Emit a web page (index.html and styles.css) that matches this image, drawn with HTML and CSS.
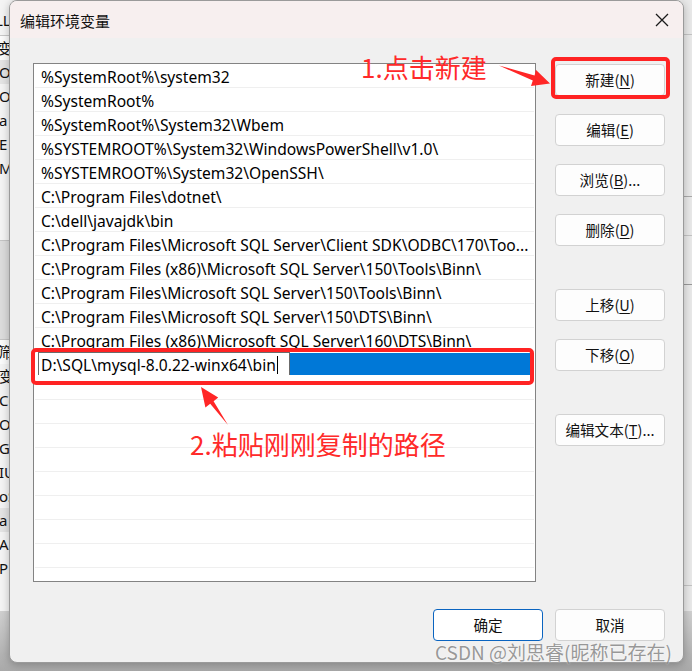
FILE: index.html
```html
<!DOCTYPE html>
<html lang="zh-CN">
<head>
<meta charset="utf-8">
<title>编辑环境变量</title>
<link rel="stylesheet" href="styles.css">
</head>
<body>
<div class="desk">
  <div class="bg-left">
    <div class="bl bl-top">LL</div>
    <div class="bl bl-white">变量</div>
    <div class="bl bl-grey">Or</div>
    <div class="bl">Or</div>
    <div class="bl">a</div>
    <div class="bl">E</div>
    <div class="bl">M</div>
    <div class="bl bl-gap"></div>
    <div class="bl bl-band"></div>
    <div class="bl bl-white">筛选</div>
    <div class="bl">变量</div>
    <div class="bl">Co</div>
    <div class="bl">Or</div>
    <div class="bl">G</div>
    <div class="bl">IU</div>
    <div class="bl">oS</div>
    <div class="bl bl-grey">a</div>
    <div class="bl">A</div>
    <div class="bl">P</div>
  </div>
  <div class="bg-right">
    <div class="br br1"></div>
    <div class="br br2"></div>
    <div class="br br3"></div>
    <div class="br br4"></div>
    <div class="br br5"></div>
  </div>
  <div class="bg-bottom"></div>

  <div class="dialog">
    <div class="titlebar">
      <span class="title">编辑环境变量</span>
      <svg class="close" width="14" height="14" viewBox="0 0 14 14"><path d="M1 1 L13 13 M13 1 L1 13" stroke="#1a1a1a" stroke-width="1.3" fill="none"/></svg>
    </div>
    <div class="body">
      <div class="main">
        <div class="list">
          <div class="row">%SystemRoot%\system32</div>
          <div class="row">%SystemRoot%</div>
          <div class="row">%SystemRoot%\System32\Wbem</div>
          <div class="row">%SYSTEMROOT%\System32\WindowsPowerShell\v1.0\</div>
          <div class="row">%SYSTEMROOT%\System32\OpenSSH\</div>
          <div class="row">C:\Program Files\dotnet\</div>
          <div class="row">C:\dell\javajdk\bin</div>
          <div class="row">C:\Program Files\Microsoft SQL Server\Client SDK\ODBC\170\Too...</div>
          <div class="row">C:\Program Files (x86)\Microsoft SQL Server\150\Tools\Binn\</div>
          <div class="row">C:\Program Files\Microsoft SQL Server\150\Tools\Binn\</div>
          <div class="row">C:\Program Files\Microsoft SQL Server\150\DTS\Binn\</div>
          <div class="row">C:\Program Files (x86)\Microsoft SQL Server\160\DTS\Binn\</div>
          <div class="row row-edit"><span class="editbox">D:\SQL\mysql-8.0.22-winx64\bin<span class="caret"></span></span><span class="sel"></span></div>
          <div class="row"></div>
          <div class="row"></div>
          <div class="row"></div>
          <div class="row"></div>
          <div class="row"></div>
          <div class="row"></div>
          <div class="row"></div>
          <div class="row"></div>
          <div class="row"></div>
        </div>
        <div class="btns">
          <button class="btn">新建(<u>N</u>)</button>
          <button class="btn">编辑(<u>E</u>)</button>
          <button class="btn">浏览(<u>B</u>)...</button>
          <button class="btn">删除(<u>D</u>)</button>
          <button class="btn btn-sep">上移(<u>U</u>)</button>
          <button class="btn">下移(<u>O</u>)</button>
          <button class="btn btn-sep">编辑文本(<u>T</u>)...</button>
        </div>
      </div>
      <div class="footer">
        <button class="btn btn-default">确定</button>
        <button class="btn">取消</button>
      </div>
    </div>
  </div>

  <div class="mark mark-new"></div>
  <div class="mark mark-edit"></div>
  <div class="note note1">1.点击新建</div>
  <div class="note note2">2.粘贴刚刚复制的路径</div>
  <svg class="arrows" width="692" height="671" viewBox="0 0 692 671">
    <polygon fill="#ff2626" points="499,65.5 534.6,75.4 535.8,69.8 550,83.5 531,86 532.8,80.5"/>
    <polygon fill="#ff2626" points="228,425 213.6,401.2 218.2,397.6 201,387 205.4,407.4 210.2,403.8"/>
  </svg>
  <div class="watermark">CSDN @刘思睿(昵称已存在)</div>
</div>
</body>
</html>
```
FILE: styles.css
```css
* { box-sizing: border-box; }
html, body { margin: 0; padding: 0; }
body {
  width: 692px;
  height: 671px;
  overflow: hidden;
  background: #b4b4b4;
  font-family: "Noto Sans", "Noto Sans CJK SC", sans-serif;
  color: #000;
}
.desk {
  position: relative;
  width: 692px;
  height: 671px;
  overflow: hidden;
  background: #ececec;
}

/* background window strips */
.bg-left {
  position: absolute;
  left: 0;
  top: 0;
  width: 12px;
  height: 620px;
  background: #f4f4f4;
  display: flex;
  flex-direction: column;
  font-family: "Noto Sans", "Noto Sans CJK SC", sans-serif;
  font-size: 15px;
  overflow: hidden;
}
.bl {
  height: 24px;
  line-height: 24px;
  white-space: nowrap;
  text-indent: -1px;
  color: #111;
  flex: none;
}
.bl-top { height: 36px; line-height: 40px; border-bottom: 1px solid #c8c8c8; text-indent: -5px; }
.bl-white { background: #fbfbfb; text-indent: -3px; }
.bl-grey { background: #e4e4e4; }
.bl-gap { height: 60px; background: #f4f4f4; }
.bl-band { height: 100px; background: #dcdcdc; border-top: 1px solid #c4c4c4; border-bottom: 1px solid #c4c4c4; }
.bg-right {
  position: absolute;
  right: 0;
  top: 0;
  width: 10px;
  height: 671px;
  background: #e9e9e9;
}
.br { position: absolute; left: 0; width: 10px; height: 1px; background: #c4c4c4; }
.br1 { top: 34px; }
.br2 { top: 196px; background: #aaa; }
.br3 { top: 235px; }
.br4 { top: 284px; background: #999; }
.br5 { top: 585px; }
.bg-bottom {
  position: absolute;
  left: 0;
  bottom: 0;
  width: 692px;
  height: 60px;
  background: linear-gradient(#d0d0d0, #a9a9a9);
}

/* dialog */
.dialog {
  position: absolute;
  left: 9px;
  top: 0;
  width: 675px;
  height: 663px;
  border: 1px solid #9a9a9a;
  border-radius: 8px;
  background: #f0f0f0;
  overflow: hidden;
  box-shadow: 0 2px 8px rgba(0,0,0,0.25);
  display: flex;
  flex-direction: column;
}
.titlebar {
  height: 37px;
  flex: none;
  background: #f7efef;
  display: flex;
  align-items: center;
  padding: 0 14px 0 10px;
  justify-content: space-between;
}
.title {
  font-family: "Noto Sans CJK SC", sans-serif;
  font-size: 15px;
  color: #111;
  padding-top: 1px;
}
.close { margin-right: 0; margin-top: 1px; }

.body {
  flex: 1;
  padding: 25px 18px 0 23px;
  display: flex;
  flex-direction: column;
}
.main {
  display: flex;
  gap: 19px;
}
.list {
  width: 503px;
  height: 519px;
  border: 1px solid #838383;
  background: #fff;
  overflow: hidden;
  padding: 0 1px;
}
.row {
  height: 24px;
  line-height: 22px;
  padding-top: 2px;
  border-bottom: 1px solid #efefef;
  padding-left: 6px;
  font-size: 15.6px;
  white-space: nowrap;
  overflow: hidden;
  color: #000;
}
.row-edit {
  display: flex;
  padding: 0 4px 0 3px;
  border-bottom-color: #fff;
}
.editbox {
  width: 252px;
  height: 24px;
  border: 1px solid #6b6b6b;
  background: #fff;
  line-height: 22px;
  padding: 1px 0 0 2px;
  display: flex;
  align-items: center;
  white-space: nowrap;
}
.caret {
  display: inline-block;
  width: 1px;
  height: 18px;
  background: #000;
  margin-left: 1px;
}
.sel {
  flex: 1;
  background: #0078d7;
  height: 22px;
  margin-top: 1px;
}

.btns {
  display: flex;
  flex-direction: column;
  gap: 18px;
  padding-top: 1px;
}
.btn {
  width: 110px;
  height: 32px;
  border: 1px solid #d2d2d2;
  border-radius: 4px;
  background: #fdfdfd;
  font-family: "Noto Sans CJK SC", sans-serif;
  font-size: 14.6px;
  color: #111;
  padding: 0;
  line-height: 30px;
}
.btn u { text-underline-offset: 2px; }
.btn-sep { margin-top: 25px; }
.footer {
  display: flex;
  justify-content: flex-end;
  gap: 12px;
  margin-top: 27px;
}
.btn-default {
  border: 1px solid #0a64c0;
  background: #fff;
}

/* annotations */
.mark {
  position: absolute;
  border: 4px solid #ff2323;
  border-radius: 5px;
}
.mark-new { left: 551px; top: 57px; width: 119px; height: 42px; }
.mark-edit { left: 31px; top: 348px; width: 503px; height: 37px; }
.note {
  position: absolute;
  color: #ff2a2a;
  font-family: "Noto Sans CJK SC", sans-serif;
  font-size: 26px;
  line-height: 30px;
  white-space: nowrap;
}
.note1 { left: 361px; top: 52px; }
.note2 { left: 190px; top: 429px; }
.arrows { position: absolute; left: 0; top: 0; }
.watermark {
  position: absolute;
  left: 435px;
  top: 640px;
  font-family: "Noto Sans CJK SC", sans-serif;
  font-size: 19px;
  line-height: 24px;
  color: rgba(120,120,120,0.75);
  white-space: nowrap;
  text-shadow: 0 0 2px rgba(255,255,255,0.8);
}
```
